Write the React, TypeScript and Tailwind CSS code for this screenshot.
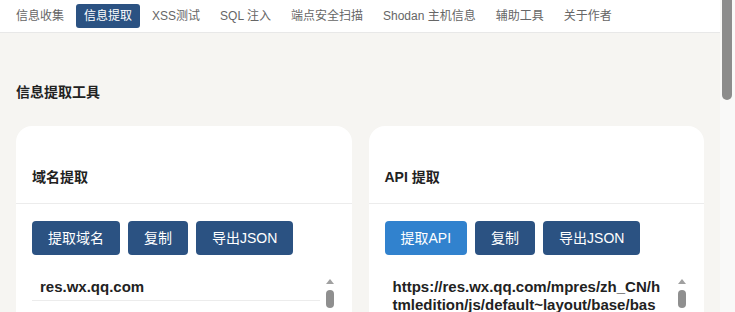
import React from "react";

const tabs = ["信息收集", "信息提取", "XSS测试", "SQL 注入", "端点安全扫描", "Shodan 主机信息", "辅助工具", "关于作者"]

const font = { fontFamily: '"Liberation Sans", "Noto Sans CJK SC", sans-serif' }

interface ToolCardProps {
    title: string
    action: string
    primaryLight?: boolean
    items: string[]
}

function ListScroll() {
    return (
        <div className="w-[12px] flex flex-col items-center pt-[8px]">
            <div className="w-0 h-0 border-l-[4px] border-r-[4px] border-b-[5px] border-l-transparent border-r-transparent border-b-[#a0a0a0]"></div>
            <div className="w-[8px] h-[18px] mt-[6px] rounded-full bg-[#8f8f8f]"></div>
        </div>
    )
}

function ToolCard({ title, action, primaryLight, items }: ToolCardProps) {
    return (
        <div className="flex-1 bg-white rounded-[16px] overflow-hidden">
            <div className="px-4 pt-[41px] pb-[16px] border-b border-[#ececec]">
                <h3 className="text-[14px] leading-[20px] font-bold text-[#222]">{title}</h3>
            </div>
            <div className="px-4 pt-[17px]">
                <div className="flex flex-row gap-[8px]">
                    <button className={"h-[34px] px-[16px] rounded-[4px] text-white text-[14px] " + (primaryLight ? "bg-[#3182ce]" : "bg-[#2b5282]")}>
                        {action}
                    </button>
                    <button className="h-[34px] px-[16px] rounded-[4px] text-white text-[14px] bg-[#2b5282]">复制</button>
                    <button className="h-[34px] px-[16px] rounded-[4px] text-white text-[14px] bg-[#2b5282]">导出JSON</button>
                </div>
                <div className="mt-[16px] flex flex-row">
                    <div className="flex-1 min-w-0 pr-[4px]">
                        {items.map((item) => (
                            <div key={item} className="pl-[8px] pr-[9px] pt-[7px] pb-[4px] border-b border-[#ececec] text-[15px] leading-[18px] font-bold text-[#222] break-all">
                                {item}
                            </div>
                        ))}
                    </div>
                    <ListScroll/>
                </div>
            </div>
        </div>
    )
}

export default function App() {
    return (
        <div className="h-[312px] w-[735px] overflow-hidden flex flex-row bg-[#f6f5f2]" style={font}>
            <div className="flex-1 min-w-0">
                <nav className="h-[33px] bg-white border-b border-[#e8e8e8] flex flex-row items-center pl-[8px] gap-[4px]">
                    {tabs.map((tab, i) => (
                        <span key={tab}
                              className={"h-[24px] px-[8px] rounded-[3px] text-[12px] leading-[24px] " +
                                  (i === 1 ? "bg-[#2b5282] text-white" : "text-[#666]")}>
                            {tab}
                        </span>
                    ))}
                </nav>
                <div className="px-4 pt-[49px]">
                    <h2 className="text-[14px] leading-[20px] font-bold text-[#222]">信息提取工具</h2>
                    <div className="mt-[24px] flex flex-row gap-[17px]">
                        <ToolCard title="域名提取" action="提取域名"
                                  items={["res.wx.qq.com"]}/>
                        <ToolCard title="API 提取" action="提取API" primaryLight
                                  items={["https://res.wx.qq.com/mpres/zh_CN/htmledition/js/default~layout/base/base.js"]}/>
                    </div>
                </div>
            </div>
            <div className="w-[15px] bg-[#f9f9f8] pl-[2px]">
                <div className="w-[10px] h-[100px] bg-[#8c8c8c] rounded-b-[5px]"></div>
            </div>
        </div>
    )
}
